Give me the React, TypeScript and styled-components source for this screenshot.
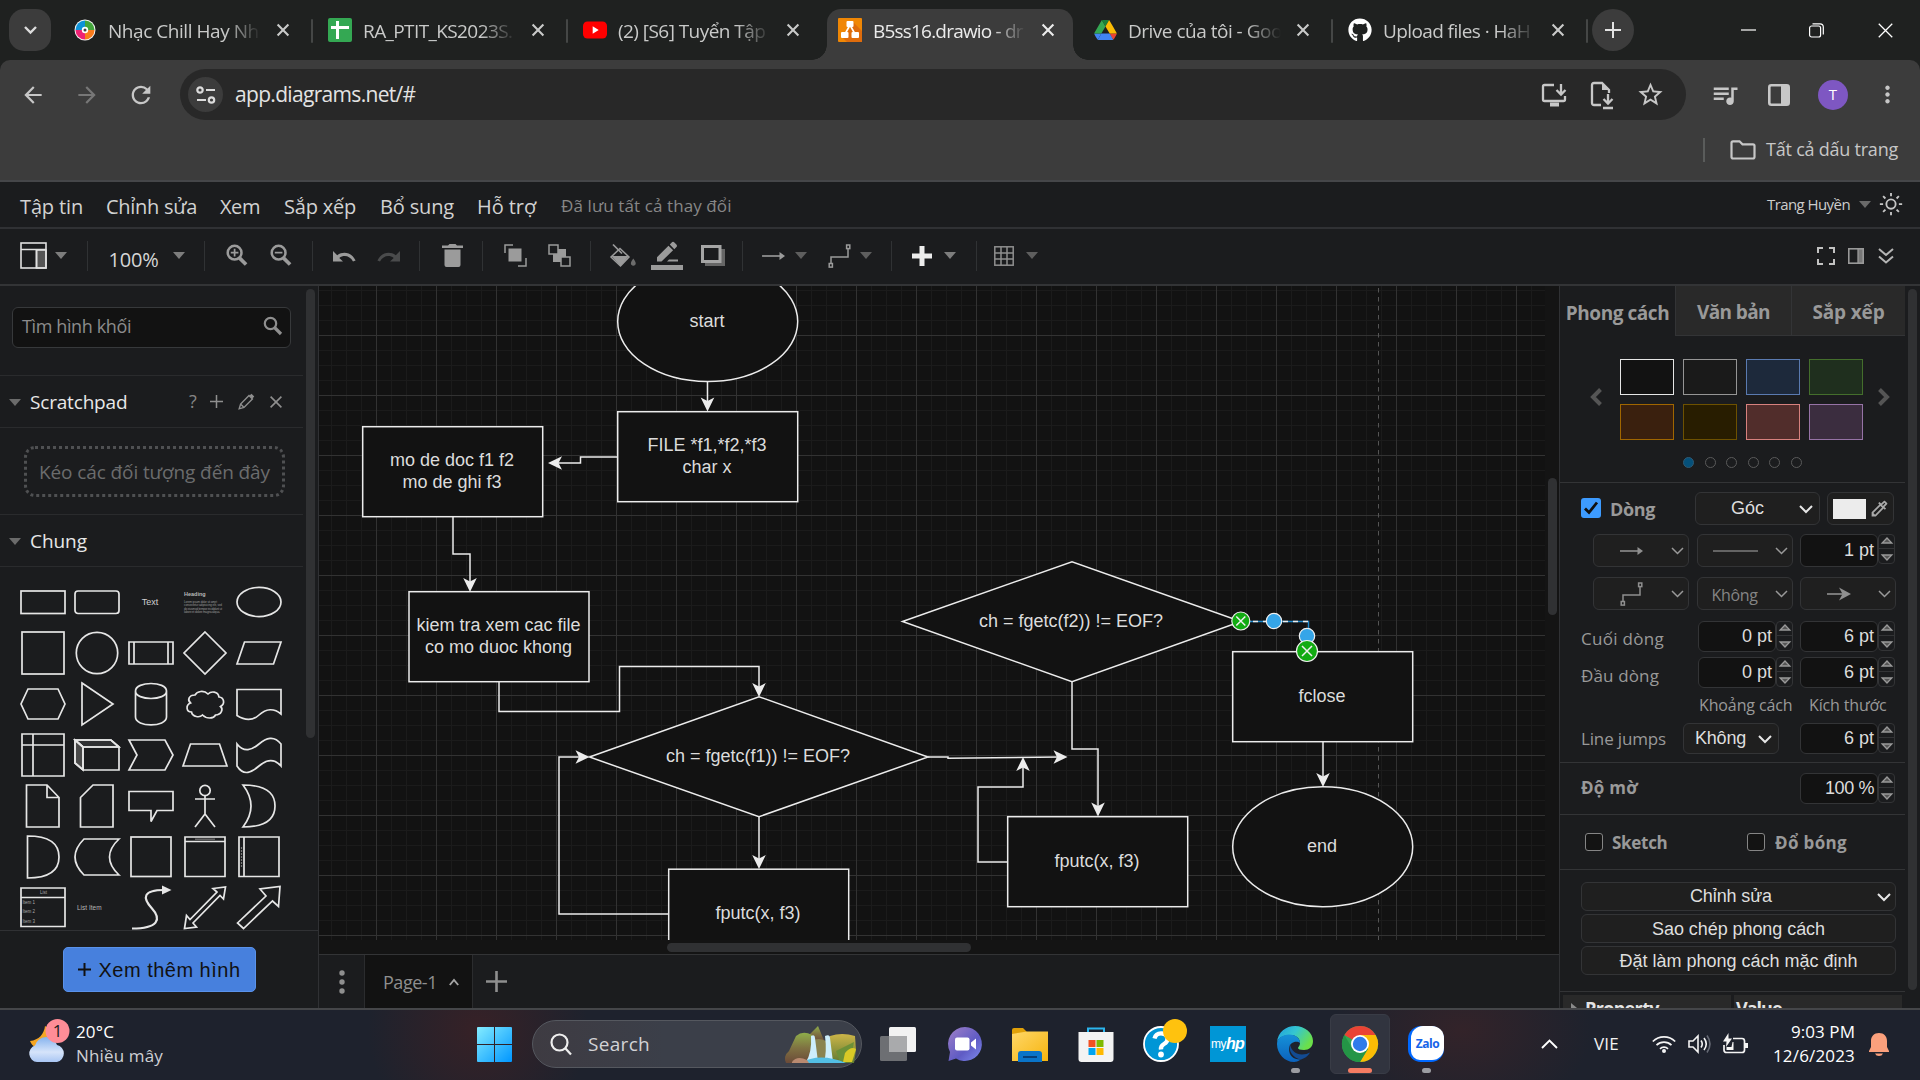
import React from 'react';
import styled, { createGlobalStyle, css } from 'styled-components';
import {
  MdArrowBack, MdArrowForward, MdRefresh, MdStarBorder, MdQueueMusic, MdMoreVert,
  MdOutlineColorize,
} from 'react-icons/md';
import { FaGithub } from 'react-icons/fa';

const ui = '"Open Sans", "Noto Sans", sans-serif';
const arial = '"Liberation Sans", sans-serif';

const GlobalStyle = createGlobalStyle`
  * { box-sizing: border-box; }
  body { margin: 0; background: #1b1c1e; overflow: hidden; }
  svg { display: block; flex-shrink: 0; overflow: visible; }
`;

const Screen = styled.div`
  width: 1920px;
  height: 1080px;
  display: flex;
  flex-direction: column;
  overflow: hidden;
  font-family: ${ui};
  color: #e3e3e3;
`;

const Text = styled.span<{ $s?: number; $ls?: number; $c?: string; $b?: boolean; $arial?: boolean; $pt?: number }>`
  font-family: ${p => (p.$arial ? arial : ui)};
  font-size: ${p => p.$s ?? 18}px;
  letter-spacing: ${p => p.$ls ?? 0}px;
  color: ${p => p.$c ?? 'inherit'};
  font-weight: ${p => (p.$b ? 700 : 400)};
  padding-top: ${p => p.$pt ?? 0}px;
  line-height: 1.3;
  white-space: nowrap;
`;

const Slot = styled.div<{ $w: number; $gap?: number; $h?: number; $end?: boolean }>`
  width: ${p => p.$w}px;
  ${p => p.$h && `height: ${p.$h}px;`}
  margin-left: ${p => p.$gap ?? 0}px;
  flex-shrink: 0;
  display: flex;
  align-items: center;
  justify-content: ${p => (p.$end ? 'flex-end' : 'center')};
`;

/* ---------- browser chrome ---------- */

const TabStrip = styled.div`
  height: 60px;
  background: #1f2120;
  display: flex;
  align-items: flex-start;
  padding: 9px 0 0 9px;
`;

const TabSearch = styled.div`
  width: 42px;
  height: 42px;
  border-radius: 15px;
  margin-right: 11px;
  background: #3c3c3c;
  display: flex;
  align-items: center;
  justify-content: center;
`;

const TabCell = styled.div`
  width: 255px;
  height: 51px;
  display: flex;
`;

const TabBody = styled.div<{ $active?: boolean }>`
  position: relative;
  width: 246px;
  height: 51px;
  padding: 0 0 9px 11px;
  display: flex;
  align-items: center;
  color: #c9cac9;
  ${p => p.$active && css`
    background: #3c3c3c;
    color: #ececec;
    border-radius: 14px 14px 0 0;
    &::before, &::after {
      content: '';
      position: absolute;
      bottom: 0;
      width: 15px;
      height: 15px;
    }
    &::before { left: -15px; background: radial-gradient(circle at 0 0, transparent 14.5px, #3c3c3c 15px); }
    &::after { right: -15px; background: radial-gradient(circle at 100% 0, transparent 14.5px, #3c3c3c 15px); }
  `}
`;

const TabTitle = styled.div`
  width: 153px;
  margin: 2px 12px 0 11px;
  overflow: hidden;
  mask-image: linear-gradient(90deg, #000 118px, transparent 153px);
`;

const TabDivider = styled.div`
  width: 2px;
  height: 24px;
  margin: 10px 0 0 3px;
  background: #454746;
  border-radius: 1px;
`;

const NewTab = styled(TabSearch)`
  border-radius: 50%;
  margin: 0;
`;

const WindowButtons = styled.div`
  margin-left: auto;
  width: 206px;
  height: 42px;
  display: flex;
  align-items: center;
`;

const Toolbar = styled.div`
  background: #1f2120;
`;

const ToolbarInner = styled.div`
  height: 69px;
  padding-top: 9px;
  background: #3c3c3c;
  border-radius: 10px 10px 0 0;
  display: flex;
  align-items: flex-start;
  color: #c7c7c7;
`;

const NavRow = styled.div`
  height: 51px;
  display: flex;
  align-items: center;
`;

const Omnibox = styled.div`
  width: 1506px;
  height: 51px;
  padding-left: 8px;
  border-radius: 26px;
  background: #282828;
  display: flex;
  align-items: center;
`;

const SiteInfo = styled.div`
  width: 35px;
  height: 35px;
  margin-right: 12px;
  border-radius: 50%;
  background: #3c3c3c;
  display: flex;
  align-items: center;
  justify-content: center;
`;

const OmniActions = styled.div`
  margin: 0 12px 0 auto;
  display: flex;
`;

const Avatar = styled.div`
  width: 30px;
  height: 30px;
  border-radius: 50%;
  background: #7e57c2;
  display: flex;
  align-items: center;
  justify-content: center;
`;

const BookmarkBar = styled.div`
  height: 53px;
  padding: 0 22px 10px 0;
  background: #3c3c3c;
  border-bottom: 2px solid #454649;
  display: flex;
  align-items: center;
  justify-content: flex-end;
  color: #c7c7c7;
`;

const BookmarkDivider = styled.div`
  width: 2px;
  height: 24px;
  margin-right: 25px;
  background: #5a5c5b;
`;

/* ---------- application ---------- */

const MenuBar = styled.div`
  height: 47px;
  padding: 0 16px 0 20px;
  border-bottom: 2px solid #303134;
  background: #1b1c1e;
  display: flex;
  align-items: center;
`;

const MenuItems = styled.div`
  display: flex;
  align-items: center;
  margin-top: 4px;
`;

const MenuItem = styled.div<{ $w: number }>`
  width: ${p => p.$w}px;
  flex-shrink: 0;
`;

const UserArea = styled.div`
  margin-left: auto;
  display: flex;
  align-items: center;
`;

const ToolRow = styled.div`
  height: 57px;
  padding: 0 19px 2px 13px;
  border-bottom: 2px solid #333436;
  background: #1b1c1e;
  display: flex;
  align-items: center;
  color: #9b9b9b;
`;

const ToolDivider = styled.div`
  width: 1px;
  height: 30px;
  background: #303234;
`;

const ToolRight = styled.div`
  margin-left: auto;
  display: flex;
  align-items: center;
`;

const Workspace = styled.div`
  height: 722px;
  display: flex;
  background: #1b1c1e;
`;

const Sidebar = styled.div`
  width: 319px;
  height: 722px;
  border-right: 1px solid #303134;
  display: flex;
  flex-direction: column;
`;

const SidebarScroll = styled.div`
  height: 645px;
  display: flex;
  justify-content: space-between;
  padding-right: 3px;
  overflow: hidden;
  border-bottom: 1px solid #303134;
`;

const SidebarContent = styled.div`
  width: 303px;
`;

const Thumb = styled.div<{ $w: number; $h: number }>`
  width: ${p => p.$w}px;
  height: ${p => p.$h}px;
  border-radius: 5px;
  background: #303133;
`;

const SearchArea = styled.div`
  height: 90px;
  padding: 21px 12px 0 12px;
  border-bottom: 1px solid #2a2b2d;
`;

const SearchBox = styled.div`
  width: 279px;
  height: 41px;
  padding: 0 8px 2px 9px;
  border: 1px solid #37393b;
  border-radius: 6px;
  background: #121212;
  display: flex;
  align-items: center;
  justify-content: space-between;
  color: #8c8c8c;
`;

const SectionHead = styled.div`
  height: 52px;
  padding: 1px 14px 0 9px;
  border-bottom: 1px solid #2a2b2d;
  display: flex;
  align-items: center;
  color: #e8e8e8;
`;

const HeadIcons = styled.div`
  margin-left: auto;
  display: flex;
  color: #8f8f8f;
`;

const DropArea = styled.div`
  height: 87px;
  padding: 18px 0 0 24px;
  border-bottom: 1px solid #2a2b2d;
`;

const DropBox = styled.div`
  width: 261px;
  height: 51px;
  padding-top: 2px;
  border: 3px dotted #4f5052;
  border-radius: 11px;
  display: flex;
  align-items: center;
  justify-content: center;
`;

const ShapeGrid = styled.div`
  padding: 9px 0 0 16px;
  display: grid;
  grid-template-columns: repeat(5, 54px);
  grid-auto-rows: 51px;
  align-items: center;
  justify-items: center;
`;

const SidebarFoot = styled.div`
  height: 77px;
  padding-top: 16px;
  display: flex;
  justify-content: center;
`;

const MoreShapes = styled.div`
  width: 193px;
  height: 45px;
  border-radius: 5px;
  border: 1px solid #5a92ea;
  background: #4780dd;
  color: #111;
  display: flex;
  align-items: center;
  justify-content: center;
  gap: 8px;
`;

const CanvasColumn = styled.div`
  width: 1240px;
  height: 722px;
  background: #141414;
  display: flex;
  flex-direction: column;
`;

const CanvasRow = styled.div`
  height: 654px;
  display: flex;
`;

const CanvasView = styled.svg`
  width: 1226px;
  height: 654px;
  overflow: hidden;
  background: #121212;
`;

const VScroll = styled.div`
  padding: 192px 0 0 3px;
`;

const HScroll = styled.div`
  height: 14px;
  padding: 3px 0 0 348px;
`;

const PageBar = styled.div`
  height: 54px;
  border-top: 1px solid #333436;
  background: #1b1c1e;
  display: flex;
  align-items: center;
  color: #8f8f8f;
`;

const PageTab = styled.div`
  width: 109px;
  height: 53px;
  border: 1px solid #2b2c2e;
  border-width: 0 1px;
  background: #121212;
  display: flex;
  align-items: center;
  padding: 3px 0 0 18px;
  gap: 12px;
`;

const Panel = styled.div`
  width: 361px;
  height: 722px;
  border-left: 1px solid #303134;
  display: flex;
`;

const PanelContent = styled.div`
  width: 345px;
  height: 722px;
  overflow: hidden;
  color: #999;
`;

const PanelScroll = styled.div`
  width: 15px;
  padding: 3px 0 0 3px;
`;

const Tabs = styled.div`
  height: 50px;
  display: flex;
`;

const PanelTab = styled.div<{ $w: number; $off?: boolean }>`
  width: ${p => p.$w}px;
  height: 50px;
  padding-top: 4px;
  background: ${p => (p.$off ? '#292929' : 'transparent')};
  border: solid #333436;
  border-width: ${p => (p.$off ? '0 0 1px 1px' : '0')};
  display: flex;
  align-items: center;
  justify-content: center;
`;

const SwatchSection = styled.div`
  height: 147px;
  padding-top: 23px;
  border-bottom: 1px solid #333436;
`;

const SwatchRow = styled.div`
  display: flex;
  align-items: center;
  padding: 0 13px 0 29px;
  gap: 17px;
`;

const PageArrow = styled.svg`
  width: 14px;
  height: 18px;
  margin-bottom: 6px;
  fill: none;
  stroke: #555;
  stroke-width: 4;
`;

const Swatches = styled.div`
  display: grid;
  grid-template-columns: repeat(4, 54px);
  grid-auto-rows: 36px;
  gap: 9px;
  margin-right: -3px;
`;

const Swatch = styled.div<{ $bg: string; $bd: string }>`
  border: 1px solid ${p => p.$bd};
  background: ${p => p.$bg};
`;

const Dots = styled.div`
  display: flex;
  gap: 10.5px;
  margin: 17px 0 0 123px;
`;

const Dot = styled.div<{ $on?: boolean }>`
  width: 11px;
  height: 11px;
  border-radius: 50%;
  border: 1px solid ${p => (p.$on ? '#2f5a73' : '#5a5a5a')};
  background: ${p => (p.$on ? '#05507a' : 'transparent')};
`;

const LineSection = styled.div`
  height: 280px;
  height: 271px;
  border-bottom: 1px solid #333436;
`;

const Row = styled.div<{ $h: number; $mt?: number; $flush?: boolean }>`
  height: ${p => p.$h}px;
  margin-top: ${p => p.$mt ?? 0}px;
  padding-left: ${p => (p.$flush ? 0 : 21)}px;
  display: flex;
  align-items: center;
`;

const Cell = styled.div<{ $w: number; $mt?: number }>`
  width: ${p => p.$w}px;
  margin-top: ${p => p.$mt ?? 0}px;
  flex-shrink: 0;
  display: flex;
  align-items: center;
`;

const Box = styled.div<{ $w: number; $ml?: number }>`
  width: ${p => p.$w}px;
  height: 100%;
  margin-left: ${p => p.$ml ?? 0}px;
  flex-shrink: 0;
  border: 1px solid #333436;
  border-radius: 6px;
  background: #1f1f1f;
  display: flex;
  align-items: center;
`;

const NumBox = styled(Box)`
  background: #121212;
  justify-content: flex-end;
  padding: 0 3px 0 0;
  color: #dcdcdc;
`;

const StepBox = styled.div`
  width: 17px;
  height: 30px;
  align-self: flex-start;
  border: 1px solid #333436;
  border-radius: 4px;
  display: flex;
  flex-direction: column;
  justify-content: space-around;
  align-items: center;
`;

const StepLine = styled.div`
  width: 15px;
  height: 1px;
  background: #333436;
`;

const Check = styled.div<{ $s: number; $on?: boolean }>`
  width: ${p => p.$s}px;
  height: ${p => p.$s}px;
  border-radius: 3px;
  border: ${p => (p.$on ? '0' : '1.5px solid #858585')};
  background: ${p => (p.$on ? '#3d9bff' : '#131313')};
  display: flex;
  align-items: center;
  justify-content: center;
`;

const SimpleSection = styled.div<{ $h: number }>`
  height: ${p => p.$h}px;
  padding-left: 21px;
  border-bottom: 1px solid #333436;
  display: flex;
  align-items: center;
`;

const ButtonSection = styled.div`
  height: 122px;
  padding: 12px 0 0 21px;
  border-bottom: 1px solid #333436;
  display: flex;
  flex-direction: column;
  gap: 3px;
`;

const WideButton = styled.div`
  width: 315px;
  height: 29px;
  padding-top: 1px;
  border: 1px solid #333436;
  border-radius: 6px;
  background: #1f1f1f;
  color: #dedede;
  display: flex;
  align-items: center;
  justify-content: center;
`;

const PropertyHead = styled.div`
  height: 40px;
  padding: 3px 0 0 3px;
  display: grid;
  grid-template-columns: 168px 168px;
  gap: 3px;
  color: #e4e4e4;
`;

const PropertyCell = styled.div`
  background: #292929;
  padding-top: 2px;
  display: flex;
`;

/* ---------- taskbar ---------- */

const Taskbar = styled.div`
  height: 72px;
  padding-bottom: 2px;
  border-top: 2px solid #454649;
  background:
    radial-gradient(ellipse 110px 110px at 478px 20px, rgba(56, 33, 38, 0.95), transparent),
    radial-gradient(ellipse 130px 90px at 1462px 20px, rgba(52, 35, 41, 0.95), transparent),
    #1e222d;
  display: flex;
  align-items: center;
`;

const Weather = styled.div`
  width: 477px;
  padding-left: 27px;
  display: flex;
  align-items: center;
  gap: 9px;
`;

const Stack = styled.div<{ $right?: boolean }>`
  display: flex;
  flex-direction: column;
  align-items: ${p => (p.$right ? 'flex-end' : 'flex-start')};
  gap: 2px;
`;

const TaskSearch = styled.div`
  width: 330px;
  height: 48px;
  margin-left: 20px;
  padding: 0 4px 0 17px;
  border-radius: 24px;
  border: 1px solid #55585f;
  background: linear-gradient(90deg, #3e3b42, #3b3f49 40%);
  display: flex;
  align-items: center;
  gap: 16px;
`;

const SearchArt = styled.div`
  margin-left: auto;
`;

const TaskApp = styled.div<{ $active?: boolean; $w?: number }>`
  width: ${p => p.$w ?? 66}px;
  height: 60px;
  border-radius: 6px;
  background: ${p => (p.$active ? '#31343f' : 'transparent')};
  border: 1px solid ${p => (p.$active ? '#393c46' : 'transparent')};
  display: flex;
  flex-direction: column;
  align-items: center;
  padding-top: 11px;
`;

const Indicator = styled.div<{ $w: number; $c: string }>`
  width: ${p => p.$w}px;
  height: 5px;
  margin-top: 6px;
  border-radius: 3px;
  background: ${p => p.$c};
`;

const HpTile = styled.div`
  width: 36px;
  height: 36px;
  background: #0096d6;
  color: #fff;
  font: italic 700 16px ${arial};
  letter-spacing: -0.8px;
  display: flex;
  align-items: center;
  justify-content: center;
`;

const HpSmall = styled.span`
  font: 400 12px ${arial};
  letter-spacing: -0.5px;
`;

const ZaloTile = styled.div`
  width: 36px;
  height: 36px;
  border-radius: 13px;
  background: #0068ff;
  padding-left: 3px;
`;

const ZaloFace = styled.div`
  width: 33px;
  height: 34px;
  border-radius: 12px 12px 12px 9px;
  background: #fff;
  color: #1664e8;
  font: 700 12px ${ui};
  letter-spacing: -0.4px;
  display: flex;
  align-items: center;
  justify-content: center;
`;

const Tray = styled.div`
  margin-left: auto;
  display: flex;
  align-items: center;
  color: #f2f2f2;
`;

/* ---------- small icons ---------- */

const Cross = ({ s = 12, w = 1.8, c = 'currentColor' }: { s?: number; w?: number; c?: string }) => (
  <svg width={s} height={s} viewBox="0 0 12 12" stroke={c} strokeWidth={(w * 12) / s} fill="none">
    <path d="M.6.6 11.4 11.4M11.4.6.6 11.4" />
  </svg>
);
const Plus = ({ s = 14, w = 2 }: { s?: number; w?: number }) => (
  <svg width={s} height={s} viewBox={`0 0 ${s} ${s}`} stroke="currentColor" strokeWidth={w}>
    <path d={`M0 ${s / 2}H${s}M${s / 2} 0V${s}`} />
  </svg>
);
const Caret = ({ c = '#7d7d7d', w = 12 }: { c?: string; w?: number }) => (
  <svg width={w} height={7} viewBox="0 0 12 7" preserveAspectRatio="none"><path d="M0 0h12L6 7z" fill={c} /></svg>
);
const Chevron = ({ w = 14, sw = 2, c = '#e6e6e6' }: { w?: number; sw?: number; c?: string }) => (
  <svg width={w} height={w / 2 + 1} viewBox={`0 0 ${w} ${w / 2 + 1}`} fill="none" stroke={c} strokeWidth={sw}>
    <path d={`M1 1 ${w / 2} ${w / 2} ${w - 1} 1`} />
  </svg>
);
const ConnectorIcon = ({ c = '#9b9b9b' }: { c?: string }) => (
  <svg width="24" height="24" viewBox="0 0 24 24" fill="none" stroke={c} strokeWidth="1.5">
    <path d="M3 19.5V13h17V4.5" /><rect x="1.2" y="19.5" width="3.2" height="3.6" /><rect x="18.6" y="1" width="3.2" height="3.6" />
  </svg>
);
const ArrowIcon = ({ c = '#9b9b9b', big }: { c?: string; big?: boolean }) => (
  <svg width="24" height="14" viewBox="0 0 24 14">
    <path d="M0 7h18" stroke={c} strokeWidth="1.6" />
    {big ? <path d="M12 .5 24 7 12 13.5 15.5 7z" fill={c} /> : <path d="M17.5 3 23 7l-5.5 4z" fill={c} />}
  </svg>
);
const Stepper = () => (
  <StepBox>
    <svg width="12" height="7" viewBox="0 0 12 7"><path d="M1.2 6 6 1l4.8 5z" fill="#555" stroke="#999" strokeWidth="1.3" /></svg>
    <StepLine />
    <svg width="12" height="7" viewBox="0 0 12 7"><path d="M1.2 1 6 6l4.8-5z" fill="#555" stroke="#999" strokeWidth="1.3" /></svg>
  </StepBox>
);
const PencilIcon = () => (
  <svg width="17" height="17" viewBox="0 0 17 17" fill="none" stroke="currentColor" strokeWidth="1.4">
    <path d="M1.2 15.8 2.6 11 11 2.6l3.4 3.4L6 14.4zM2.6 11 6 14.4" /><path d="m12.4 1.8 2.8 2.8" strokeWidth="3" />
  </svg>
);
const ZoomIcon = ({ plus }: { plus?: boolean }) => (
  <svg width="22" height="23" viewBox="0 0 23 23" fill="none" stroke="#9b9b9b">
    <circle cx="9" cy="8.5" r="7.2" strokeWidth="2.6" /><path d="m14 14 7 7" strokeWidth="3.8" />
    <path d={plus ? 'M5 8.5h8M9 4.5v8' : 'M5 8.5h8'} strokeWidth="1.8" />
  </svg>
);
const LensIcon = () => (
  <svg width="19" height="19" viewBox="0 0 19 19" fill="none" stroke="#8f8f8f">
    <circle cx="7.5" cy="6.5" r="5.7" strokeWidth="2.2" /><path d="m11.5 10.5 6.500 6.500" strokeWidth="3.2" />
  </svg>
);

/* ---------- tabs ---------- */

const MusicIcon = () => (
  <svg width="22" height="22" viewBox="0 0 22 22">
    <circle cx="11" cy="11" r="10.5" fill="#f4f4f4" />
    <path d="M11 11V1.5a9.5 9.5 0 0 1 9.5 9.5z" fill="#43a53c" />
    <path d="M11 11h9.5a9.5 9.5 0 0 1-9.5 9.5z" fill="#f97b1c" />
    <path d="M11 11v9.5A9.5 9.5 0 0 1 1.5 11z" fill="#ef2174" />
    <path d="M11 11H1.5A9.5 9.5 0 0 1 11 1.5z" fill="#0d93d8" />
    <circle cx="11" cy="11" r="3.2" fill="#fff" /><circle cx="11" cy="11" r="1.5" fill="#444" />
  </svg>
);
const SheetIcon = () => (
  <svg width="24" height="24" viewBox="0 0 24 24"><rect width="24" height="24" rx="2" fill="#34a853" /><path d="M9.5 3v18M3 9.5h18" stroke="#fff" strokeWidth="3" /></svg>
);
const YoutubeIcon = () => (
  <svg width="24" height="24" viewBox="0 0 24 24"><rect x="0" y="3.5" width="24" height="17" rx="4.5" fill="#f00" /><path d="m9.700 8.300 6 3.700-6 3.700z" fill="#fff" /></svg>
);
const DrawioIcon = () => (
  <svg width="24" height="24" viewBox="0 0 24 24">
    <rect width="24" height="24" rx="1" fill="#f08705" /><path d="M15 4 24 13v11H9l-5-5 8-8z" fill="#df6c0c" />
    <path d="m12 7-5 9M12 7l5 9" stroke="#fff" strokeWidth="1.6" />
    <rect x="8.5" y="3" width="7" height="6" rx="1" fill="#fff" /><rect x="3" y="14" width="7.5" height="6" rx="1" fill="#fff" /><rect x="13.5" y="14" width="7.5" height="6" rx="1" fill="#fff" />
  </svg>
);
const DriveIcon = () => (
  <svg width="23" height="20" viewBox="0 0 87.3 78">
    <path d="m6.6 66.850 3.850 6.650c.8 1.400 1.950 2.500 3.300 3.300l13.750-23.800h-27.500c0 1.550.4 3.100 1.200 4.500z" fill="#4285f4" />
    <path d="m43.650 25-13.750-23.800c-1.350.8-2.500 1.900-3.300 3.300l-25.400 44a9.060 9.060 0 0 0-1.200 4.500h27.500z" fill="#34a853" />
    <path d="m73.550 76.800c1.350-.8 2.500-1.900 3.300-3.300l1.600-2.750 7.650-13.250c.8-1.400 1.200-2.950 1.200-4.500h-27.500l5.850 11.500z" fill="#ea4335" />
    <path d="m43.650 25 13.750-23.800c-1.350-.8-2.900-1.200-4.500-1.200h-18.500c-1.600 0-3.150.45-4.500 1.200z" fill="#188038" />
    <path d="m59.800 53h-32.300l-13.750 23.800c1.350.8 2.900 1.200 4.500 1.200h50.800c1.600 0 3.150-.45 4.500-1.200z" fill="#4285f4" />
    <path d="m73.400 26.500-12.700-22c-.8-1.400-1.950-2.500-3.300-3.300l-13.750 23.800 16.150 28h27.450c0-1.550-.4-3.100-1.200-4.500z" fill="#fbbc04" />
  </svg>
);

type TabInfo = { title: string; ls: number; icon: React.ReactNode; active?: boolean; line?: boolean };
const tabs: TabInfo[] = [
  { title: 'Nhạc Chill Hay Nh', ls: -0.45, icon: <MusicIcon />, line: true },
  { title: 'RA_PTIT_KS2023S.', ls: -0.6, icon: <SheetIcon />, line: true },
  { title: '(2) [S6] Tuyển Tập', ls: -0.55, icon: <YoutubeIcon /> },
  { title: 'B5ss16.drawio - dr', ls: -0.8, icon: <DrawioIcon />, active: true },
  { title: 'Drive của tôi - Goo', ls: -0.5, icon: <DriveIcon />, line: true },
  { title: 'Upload files · HaH', ls: -0.6, icon: <FaGithub size={24} color="#fff" />, line: true },
];

function Browser() {
  return (
    <>
      <TabStrip>
        <TabSearch><Chevron w={13} sw={2.4} c="#dcdcdc" /></TabSearch>
        {tabs.map(t => (
          <TabCell key={t.title}>
            <TabBody $active={t.active}>
              <Slot $w={24}>{t.icon}</Slot>
              <TabTitle><Text $s={19} $ls={t.ls}>{t.title}</Text></TabTitle>
              <Slot $w={20}><Cross s={12} w={2.1} /></Slot>
            </TabBody>
            {t.line && <TabDivider />}
          </TabCell>
        ))}
        <NewTab><Plus s={16} w={2} /></NewTab>
        <WindowButtons>
          <Slot $w={69}><svg width="15" height="2"><path d="M0 1h15" stroke="#fff" strokeWidth="1.2" /></svg></Slot>
          <Slot $w={67}>
            <svg width="15" height="15" viewBox="0 0 15 15" fill="none" stroke="#fff" strokeWidth="1.2">
              <rect x=".6" y="3" width="11" height="11" rx="2" /><path d="M3.500.8h7.500q3.300 0 3.300 3.300v7.400" />
            </svg>
          </Slot>
          <Slot $w={71}><Cross s={15} w={1.3} c="#fff" /></Slot>
        </WindowButtons>
      </TabStrip>
      <Toolbar>
        <ToolbarInner>
          <NavRow>
            <Slot $w={34} $gap={16}><MdArrowBack size={26} /></Slot>
            <Slot $w={34} $gap={20}><MdArrowForward size={26} color="#777" /></Slot>
            <Slot $w={34} $gap={20}><MdRefresh size={28} /></Slot>
            <Slot $w={22} />
            <Omnibox>
              <SiteInfo>
                <svg width="20" height="18" viewBox="0 0 20 18" fill="none" stroke="#dcdcdc" strokeWidth="2.2">
                  <circle cx="4" cy="4" r="2.7" /><path d="M10 4h9M1 14h9" /><circle cx="15.5" cy="14" r="2.7" />
                </svg>
              </SiteInfo>
              <Text $s={21} $ls={-0.68} $c="#e3e3e3">app.diagrams.net/#</Text>
              <OmniActions>
                <Slot $w={48}>
                  <svg width="26" height="24" viewBox="0 0 26 24" fill="none" stroke="currentColor" strokeWidth="2.3">
                    <path d="M13 2H3.500Q2 2 2 3.500v13Q2 18 3.500 18h19q1.500 0 1.500-1.500V13" /><path d="M9 21.500h9" strokeWidth="4" /><path d="M20 1v10M15.500 7l4.500 4.500L24.500 7" />
                  </svg>
                </Slot>
                <Slot $w={48}>
                  <svg width="24" height="28" viewBox="0 0 24 28" fill="none" stroke="currentColor" strokeWidth="2.3">
                    <path d="M11 24H4q-2 0-2-2V4q0-2 2-2h8l7 7v3" /><path d="M12 2v7h7z" fill="currentColor" stroke="none" /><path d="M18 13v9M13.500 18l4.500 4.500 4.500-4.500M13 27h10" />
                  </svg>
                </Slot>
                <Slot $w={48}><MdStarBorder size={29} /></Slot>
              </OmniActions>
            </Omnibox>
            <Slot $w={40} $gap={19}><MdQueueMusic size={30} /></Slot>
            <Slot $w={40} $gap={14}>
              <svg width="22" height="22" viewBox="0 0 22 22"><rect x="1.3" y="1.3" width="19.4" height="19.4" rx="2" fill="none" stroke="currentColor" strokeWidth="2.6" /><path d="M13 1h8v20h-8z" fill="currentColor" /></svg>
            </Slot>
            <Slot $w={34} $gap={17}><Avatar><Text $s={15} $c="#fff">T</Text></Avatar></Slot>
            <Slot $w={34} $gap={20}><MdMoreVert size={27} /></Slot>
          </NavRow>
        </ToolbarInner>
      </Toolbar>
      <BookmarkBar>
        <BookmarkDivider />
        <Slot $w={26}>
          <svg width="26" height="20" viewBox="0 0 26 20" fill="none" stroke="currentColor" strokeWidth="2.2"><path d="M1.500 3Q1.500 1.300 3 1.300h6.500l3 3H23q1.500 0 1.500 1.500v11q0 1.700-1.500 1.700H3q-1.500 0-1.500-1.700z" /></svg>
        </Slot>
        <Slot $w={10} />
        <Text $s={18} $ls={-0.23}>Tất cả dấu trang</Text>
      </BookmarkBar>
    </>
  );
}

/* ---------- menus and tools ---------- */

const menus: [string, number, number][] = [
  ['Tập tin', -0.14, 86], ['Chỉnh sửa', -0.28, 114], ['Xem', -0.43, 64],
  ['Sắp xếp', -0.21, 96], ['Bổ sung', -0.15, 97], ['Hỗ trợ', -0.08, 84],
];

function Menus() {
  return (
    <MenuBar>
      <MenuItems>
        {menus.map(([name, ls, w]) => <MenuItem key={name} $w={w}><Text $s={20} $ls={ls} $c="#d2d2d2">{name}</Text></MenuItem>)}
        <Text $s={17} $ls={0.1} $c="#878787">Đã lưu tất cả thay đổi</Text>
      </MenuItems>
      <UserArea>
        <Text $s={15} $ls={-0.58} $c="#cccccc">Trang Huyền</Text>
        <Slot $w={12} $gap={9}><Caret c="#6a6a6a" /></Slot>
        <Slot $w={26} $gap={7}>
          <svg width="26" height="26" viewBox="0 0 26 28" fill="none" stroke="#c6c6c6" strokeWidth="2">
            <circle cx="13" cy="13" r="5" /><path d="M13 1v3.500M13 21.500V25M1 13h3.500M21.500 13H25M4.500 4.500 7 7M19 19l2.500 2.500M4.500 21.500 7 19M19 7l2.500-2.500" />
          </svg>
        </Slot>
      </UserArea>
    </MenuBar>
  );
}

function Tools() {
  return (
    <ToolRow>
      <Slot $w={41}>
        <svg width="27" height="27" viewBox="0 0 27 27" fill="none" stroke="#e0e0e0" strokeWidth="1.6">
          <path d="M16.500 8H26v18h-9.500z" fill="#555" /><rect x="1" y="1" width="25" height="25" /><path d="M1 7.500h25M16.500 7.500V26" />
        </svg>
      </Slot>
      <Slot $w={12} $gap={1}><Caret /></Slot>
      <Slot $w={40}><ToolDivider /></Slot>
      <Slot $w={53}><Text $s={20} $ls={-0.21} $c="#d6d6d6" $pt={9}>100%</Text></Slot>
      <Slot $w={37}><Caret /></Slot>
      <Slot $w={14}><ToolDivider /></Slot>
      <Slot $w={52}><ZoomIcon plus /></Slot>
      <Slot $w={36}><ZoomIcon /></Slot>
      <Slot $w={26}><ToolDivider /></Slot>
      <Slot $w={38}>
        <svg width="23" height="12" viewBox="0 0 23 12"><path d="M0 1v10.500h10L6.300 8C11 4.500 17 6 20 11.500l2.600-1C19 3 11 .5 4.200 5.200z" fill="#9b9b9b" /></svg>
      </Slot>
      <Slot $w={50}>
        <svg width="23" height="12" viewBox="0 0 23 12"><path d="M23 1v10.500H13L16.700 8C12 4.500 6 6 3 11.500l-2.600-1C4 3 12 .5 18.800 5.200z" fill="#4a4b4c" /></svg>
      </Slot>
      <Slot $w={12}><ToolDivider /></Slot>
      <Slot $w={54}><svg width="21" height="23" viewBox="0 0 21 23" fill="#9b9b9b"><path d="M0 1.500h6L7.500 0h6L15 1.500h6V4H0zM2.500 5.500h16V21q0 2-2 2h-12q-2 0-2-2z" /></svg></Slot>
      <Slot $w={6}><ToolDivider /></Slot>
      <Slot $w={60}>
        <svg width="23" height="23" viewBox="0 0 23 23" fill="none" stroke="#9b9b9b" strokeWidth="1.5"><path d="M1 9V1h8M22 14v8h-8" /><rect x="4.5" y="4.5" width="13" height="13" fill="#9b9b9b" stroke="none" /></svg>
      </Slot>
      <Slot $w={28}>
        <svg width="23" height="23" viewBox="0 0 23 23" fill="#1b1c1e" stroke="#9b9b9b" strokeWidth="1.5"><rect x="5" y="5" width="13" height="13" fill="#9b9b9b" stroke="none" /><rect x="1" y="1" width="9" height="9" /><rect x="13" y="13" width="9" height="9" /></svg>
      </Slot>
      <Slot $w={34}><ToolDivider /></Slot>
      <Slot $w={32}>
        <svg width="26" height="24" viewBox="0 0 26 24" fill="none" stroke="#9b9b9b">
          <path d="M10 4.500 19 13l-8.500 9L1 13z" strokeWidth="1.5" /><path d="M1.500 12h17.500L10.500 22z" fill="#9b9b9b" stroke="none" />
          <path d="m3 .5 9 9" strokeWidth="1.7" /><path d="M23.300 14.500q3.200 4 2.200 6-2.200 2.500-4.400 0-1-2 2.200-6z" fill="#6c6c6c" stroke="none" />
        </svg>
      </Slot>
      <Slot $w={56}>
        <svg width="32" height="28" viewBox="0 0 32 28" fill="#9b9b9b"><path d="M0 23h32v5H0zM6 19.500v-4.300L17.500 3.700l4.600 4.600L10.500 19.500zM18.800 2.400 21.200 0q1.200-.6 2.200.4l2 2q1 1.200.3 2.400l-2.400 2.400zM16 19.500l2-2h9v2z" /></svg>
      </Slot>
      <Slot $w={36}>
        <svg width="24" height="21" viewBox="0 0 24 21"><path d="M4 4h20v17H4z" fill="#666" /><rect x="1.5" y="1.5" width="17.5" height="15" fill="#1b1c1e" stroke="#a5a5a5" strokeWidth="3" /></svg>
      </Slot>
      <Slot $w={22}><ToolDivider /></Slot>
      <Slot $w={42}><ArrowIcon /></Slot>
      <Slot $w={12}><Caret c="#5e5e5e" /></Slot>
      <Slot $w={40} $gap={13}><ConnectorIcon /></Slot>
      <Slot $w={12}><Caret c="#5e5e5e" /></Slot>
      <Slot $w={38}><ToolDivider /></Slot>
      <Slot $w={24}><svg width="20" height="20"><path d="M0 10h20M10 0v20" stroke="#ececec" strokeWidth="5" /></svg></Slot>
      <Slot $w={32}><Caret /></Slot>
      <Slot $w={20}><ToolDivider /></Slot>
      <Slot $w={36}>
        <svg width="20" height="20" viewBox="0 0 20 20" fill="none" stroke="#8f8f8f" strokeWidth="1.5"><rect x=".8" y=".8" width="18.4" height="18.4" /><path d="M7 1v18M13 1v18M1 7h18M1 13h18" /></svg>
      </Slot>
      <Slot $w={20}><Caret c="#5e5e5e" /></Slot>
      <ToolRight>
        <Slot $w={30}><svg width="18" height="18" viewBox="0 0 18 18" fill="none" stroke="#c2c2c2" strokeWidth="2"><path d="M1 6V1h5M12 1h5v5M17 12v5h-5M6 17H1v-5" /></svg></Slot>
        <Slot $w={30}><svg width="16" height="16" viewBox="0 0 16 16"><path d="M10 1h5v14h-5z" fill="#777" /><rect x=".8" y=".8" width="14.4" height="14.4" fill="none" stroke="#999" strokeWidth="1.6" /><path d="M10 1v14" stroke="#999" strokeWidth="1.3" /></svg></Slot>
        <Slot $w={30}><svg width="16" height="16" viewBox="0 0 16 16" fill="none" stroke="#b5b5b5" strokeWidth="2"><path d="m1 1 7 6 7-6M1 8.500l7 6 7-6" /></svg></Slot>
      </ToolRight>
    </ToolRow>
  );
}

/* ---------- shape palette ---------- */

const ShapeBox = ({ children }: { children: React.ReactNode }) => (
  <svg width="48" height="48" viewBox="0 0 48 48" fill="none" stroke="#e6e6e6" strokeWidth="1.7">{children}</svg>
);

const shapes: React.ReactNode[] = [
  <rect x="2" y="13" width="44" height="22.5" />,
  <rect x="2" y="13" width="44" height="22.5" rx="3" />,
  <text x="23" y="27" fontSize="9" fontFamily="Liberation Sans, sans-serif" textAnchor="middle" fill="#d0d0d0" stroke="none">Text</text>,
  <g fill="#b9b9b9" stroke="none" fontFamily="Liberation Sans, sans-serif">
    <text x="3" y="17.5" fontSize="5.5" fontWeight="700">Heading</text>
    <text x="3" y="25" fontSize="3" textLength="33" fill="#999">Lorem ipsum dolor sit amet</text>
    <text x="3" y="28.3" fontSize="3" textLength="38" fill="#999">consectetur adipisicing elit, sed</text>
    <text x="3" y="31.6" fontSize="3" textLength="38" fill="#999">do eiusmod tempor incididunt ut</text>
    <text x="3" y="35" fontSize="3" textLength="36" fill="#999">labore et dolore magna aliqua.</text>
  </g>,
  <ellipse cx="24" cy="24" rx="22" ry="14.6" />,
  <rect x="3" y="3" width="42" height="42" />,
  <circle cx="24" cy="24" r="20.7" />,
  <path d="M2 13h44v22H2zM7 13v22M41 13v22" />,
  <path d="M24 3 45 24 24 45 3 24z" />,
  <path d="M9.500 13H46L38.500 35H2z" />,
  <path d="M9 9h30l7 15-7 15H9L2 24z" />,
  <path d="M9 3 40 24 9 45z" />,
  <path d="M8.500 11v26c0 10.500 31 10.500 31 0V11M8.500 11c0-10 31-10 31 0s-31 10-31 0" />,
  <path d="M14 15c-6 0-8 5-4.500 8-5 2-4.500 9 1 9 1 5 8 6 11 3 4 4 11 4 13 0 6 0 8-6 5-8.500 5-3 3.500-9-1.500-9.500C37 11 30 11 27 14c-4-4-11-3-13 1z" />,
  <path d="M2 9.500h44V34c-7-6-15-5.500-22 1s-15 5-22 .5z" />,
  <path d="M3 3h42v42H3zM14 3v42M3 14h42" />,
  <g><path d="M2 9h36l8 7H10z" fill="#303133" /><path d="M2 9l8 7v23l-8-7z" fill="#4a4a4a" /><path d="M2 9h36l8 7v23H10l-8-7zM10 39V16h36M2 9l8 7" /></g>,
  <path d="M2 9h36l8 15-8 15H2l8-15z" />,
  <path d="M9.500 13h29L46 35H2z" />,
  <path d="M2 13c7 9 15 6 22 0s15-9 22 0v22c-7-8-15-6-22 0s-15 11-22 0z" />,
  <path d="M7.500 3H28l12 12.500V45h-32.500zM28 3v12.500h12" />,
  <path d="M20 3h20v42H7.500V15.500z" />,
  <path d="M2 9.500h44v19H30L24 39.500V28.500H2z" />,
  <g><circle cx="24" cy="8.5" r="5.2" /><path d="M24 14v18M14 17h20M24 32 14 45M24 32l10 13" /></g>,
  <path d="M8 3q32 0 32 21T8 45q16-21 0-42z" />,
  <path d="M8.500 3q31.500 0 31.500 21T8.500 45z" />,
  <path d="M11 6h35q-19 18 0 36H11q-18-18 0-36z" />,
  <rect x="4" y="4" width="40" height="39.5" />,
  <g><path d="M4 4h40v39.500H4zM4 8.500h40" /><path d="M14 6.200h20" stroke="#777" strokeWidth="1.2" /></g>,
  <g><path d="M4 4h40v39.500H4zM9 4v39.500" /><path d="M6.500 14v20" stroke="#777" strokeDasharray="2 1" strokeWidth="1.2" /></g>,
  <g>
    <path d="M2 4h44v38.500H2zM2 13.500h44" />
    <g fill="#aaa" stroke="none" fontSize="4.5" fontFamily="Liberation Sans, sans-serif">
      <text x="21" y="9.5">List</text><text x="3.5" y="20">Item 1</text><text x="3.5" y="29">Item 2</text><text x="3.5" y="38.5">Item 3</text>
    </g>
  </g>,
  <text x="4" y="25.5" fontSize="6.5" fontFamily="Liberation Sans, sans-serif" fill="#b5b5b5" stroke="none">List Item</text>,
  <g><path d="M5 44.500c26 0 30-9 20-20S16 6 37 6" strokeWidth="2.2" /><path d="m35 1.500 9.500 4.500-9.500 4.500z" fill="#e6e6e6" stroke="none" /></g>,
  <path d="m3.500 44.500 2-13 3.500 4L36 8l-4-3.500L44.500 3l-2 12-3.500-3.500L12 39l3.500 4z" />,
  <path d="M2.500 39 31 12l-6-7 20-2.500-1.500 20-6-5.500L8.500 44.500z" />,
];

function Palette() {
  return (
    <Sidebar>
      <SidebarScroll>
        <SidebarContent>
          <SearchArea>
            <SearchBox><Text $s={18} $ls={-0.38}>Tìm hình khối</Text><LensIcon /></SearchBox>
          </SearchArea>
          <SectionHead>
            <Slot $w={12}><Caret c="#6b6b6b" /></Slot>
            <Slot $w={9} />
            <Text $s={19} $ls={-0.18} $pt={1}>Scratchpad</Text>
            <HeadIcons>
              <Slot $w={20}><Text $s={18} $c="#858585">?</Text></Slot>
              <Slot $w={26}><Plus s={13} w={1.5} /></Slot>
              <Slot $w={34}><PencilIcon /></Slot>
              <Slot $w={26}><Cross s={12} w={1.6} /></Slot>
            </HeadIcons>
          </SectionHead>
          <DropArea>
            <DropBox><Text $s={19} $ls={-0.11} $c="#6b6c6d">Kéo các đối tượng đến đây</Text></DropBox>
          </DropArea>
          <SectionHead>
            <Slot $w={12}><Caret c="#6b6b6b" /></Slot>
            <Slot $w={9} />
            <Text $s={19} $ls={-0.05} $pt={1}>Chung</Text>
          </SectionHead>
          <ShapeGrid>{shapes.map((s, i) => <ShapeBox key={i}>{s}</ShapeBox>)}</ShapeGrid>
        </SidebarContent>
        <PanelScroll><Thumb $w={9} $h={449} /></PanelScroll>
      </SidebarScroll>
      <SidebarFoot>
        <MoreShapes><Plus s={13} w={2} /><Text $arial $s={20} $ls={0.49}>Xem thêm hình</Text></MoreShapes>
      </SidebarFoot>
    </Sidebar>
  );
}

/* ---------- diagram ---------- */

const Label = styled.text`
  font: 18px ${arial};
  fill: #dcdcdc;
  stroke: none;
  text-anchor: middle;
`;

const edges = [
  'M707.5 382V403', 'M617.5 457H580.5V463H556', 'M453 517V554H470V584',
  'M499 682V711.5H619.5V666.5H759V689', 'M759 817V861', 'M668.5 914H559V757H581',
  'M928 757H948V758.2L1059 757', 'M1008 862H978V787H1023V765', 'M1072 682V749H1098V808', 'M1323 742V778',
];
const heads: [number, number, number][] = [
  [707.5, 411.5, 90], [548, 463, 180], [470, 592, 90], [759, 697, 90], [759, 869, 90],
  [589.5, 757, 0], [1067.5, 757, 0], [1023, 757, 270], [1098, 816.5, 90], [1323, 787, 90],
];

function Diagram() {
  return (
    <CanvasView viewBox="319 286 1226 654">
      <defs>
        <pattern id="minor" x="316" y="275" width="15" height="15" patternUnits="userSpaceOnUse">
          <path d="M.5 0v15M0 .5h15" stroke="#1b1b1b" />
        </pattern>
        <pattern id="major" x="316" y="275" width="60" height="60" patternUnits="userSpaceOnUse">
          <path d="M.5 0v60M0 .5h60" stroke="#323232" />
        </pattern>
      </defs>
      <rect x="319" y="286" width="1226" height="654" fill="url(#minor)" />
      <rect x="319" y="286" width="1226" height="654" fill="url(#major)" />
      <path d="M1378.500 288V940" stroke="#555" strokeDasharray="4.5 4.5" />
      <g stroke="#ececec" strokeWidth="1.5" fill="#121212">
        <ellipse cx="707.7" cy="321.5" rx="90" ry="60" />
        <rect x="617.7" y="411.7" width="180" height="90" />
        <rect x="362.7" y="426.7" width="180" height="90" />
        <rect x="409" y="591.7" width="180" height="90" />
        <path d="M589.500 757 759 696.700 928 757 759 816.700z" />
        <rect x="668.7" y="869.2" width="180" height="90" />
        <path d="M902.500 621.500 1072 561.700 1241 621.500 1072 681.700z" />
        <rect x="1007.7" y="816.7" width="180" height="90" />
        <rect x="1232.7" y="651.7" width="180" height="90" />
        <ellipse cx="1322.7" cy="846.7" rx="90" ry="60" />
      </g>
      {edges.map(d => <path key={d} d={d} fill="none" stroke="#ececec" strokeWidth="1.5" />)}
      {heads.map(([x, y, a]) => (
        <path key={`${x}-${y}`} transform={`translate(${x} ${y}) rotate(${a})`} d="M0 0-14-6.800-10.500 0-14 6.800z" fill="#ececec" />
      ))}
      <path d="M1249 621.500H1308.500V643" fill="none" stroke="#1c86c9" strokeWidth="1.5" />
      <path d="M1253 621.500H1308" fill="none" stroke="#ececec" strokeWidth="1.5" strokeDasharray="5 5" />
      <g stroke="#f0f0f0" strokeWidth="1.2">
        <circle cx="1274" cy="621" r="7.7" fill="#35a5e8" />
        <circle cx="1307" cy="636" r="7.7" fill="#35a5e8" />
        <circle cx="1240.8" cy="621" r="9" fill="#12ab12" />
        <circle cx="1307" cy="651" r="10.5" fill="#12ab12" />
        <path d="m1236.300 616.500 9 9m0-9-9 9M1302 646l10 10m0-10-10 10" strokeWidth="1.5" />
      </g>
      <Label x="707" y="327">start</Label>
      <Label x="707" y="451">FILE *f1,*f2,*f3</Label>
      <Label x="707" y="473">char x</Label>
      <Label x="452" y="466">mo de doc f1 f2</Label>
      <Label x="452" y="488">mo de ghi f3</Label>
      <Label x="498.5" y="631">kiem tra xem cac file</Label>
      <Label x="498.5" y="653">co mo duoc khong</Label>
      <Label x="758" y="762">ch = fgetc(f1)) != EOF?</Label>
      <Label x="758" y="919">fputc(x, f3)</Label>
      <Label x="1071" y="627">ch = fgetc(f2)) != EOF?</Label>
      <Label x="1097" y="867">fputc(x, f3)</Label>
      <Label x="1322" y="702">fclose</Label>
      <Label x="1322" y="852">end</Label>
    </CanvasView>
  );
}

function CanvasArea() {
  return (
    <CanvasColumn>
      <CanvasRow>
        <Diagram />
        <VScroll><Thumb $w={9} $h={137} /></VScroll>
      </CanvasRow>
      <HScroll><Thumb $w={304} $h={9} /></HScroll>
      <PageBar>
        <Slot $w={45}>
          <svg width="6" height="24" viewBox="0 0 6 24" fill="#8f8f8f"><circle cx="3" cy="3" r="2.7" /><circle cx="3" cy="12" r="2.7" /><circle cx="3" cy="21" r="2.7" /></svg>
        </Slot>
        <PageTab>
          <Text $s={18} $ls={-0.47}>Page-1</Text>
          <svg width="10" height="8" viewBox="0 0 10 8" fill="none" stroke="#a5a5a5" strokeWidth="1.9"><path d="m.8 6 4.200-5 4.200 5" /></svg>
        </PageTab>
        <Slot $w={47}><Plus s={21} w={2.6} /></Slot>
      </PageBar>
    </CanvasColumn>
  );
}

/* ---------- format panel ---------- */

const swatchColors: [string, string][] = [
  ['#121212', '#e6e6e6'], ['#1a1a1a', '#959595'], ['#1d293b', '#5a7ab0'], ['#1f2f1e', '#446e2c'],
  ['#3a200e', '#a06600'], ['#281d00', '#6d5100'], ['#512d2b', '#d7817e'], ['#3b2d3f', '#9673a6'],
];

const Num = ({ value, ml = 0, ls = 0 }: { value: string; ml?: number; ls?: number }) => (
  <>
    <NumBox $w={78} $ml={ml}><Text $arial $s={18} $ls={ls}>{value}</Text></NumBox>
    <Stepper />
  </>
);

const ThinChevron = () => <Chevron w={13} sw={1.5} c="#999" />;

function FormatPanel() {
  return (
    <Panel>
      <PanelContent>
        <Tabs>
          <PanelTab $w={115}><Text $b $s={19} $ls={-0.45}>Phong cách</Text></PanelTab>
          <PanelTab $w={116} $off><Text $b $s={19} $ls={-0.6}>Văn bản</Text></PanelTab>
          <PanelTab $w={114} $off><Text $b $s={19} $ls={-0.16}>Sắp xếp</Text></PanelTab>
        </Tabs>
        <SwatchSection>
          <SwatchRow>
            <PageArrow viewBox="0 0 14 18"><path d="M11.500 1.500 4 9l7.500 7.500" /></PageArrow>
            <Swatches>{swatchColors.map(([bg, bd]) => <Swatch key={bg} $bg={bg} $bd={bd} />)}</Swatches>
            <PageArrow viewBox="0 0 14 18"><path d="M2.500 1.500 10 9l-7.500 7.500" /></PageArrow>
          </SwatchRow>
          <Dots><Dot $on /><Dot /><Dot /><Dot /><Dot /><Dot /></Dots>
        </SwatchSection>
        <LineSection>
          <Row $h={33} $mt={9}>
            <Cell $w={29} $mt={-1}>
              <Check $s={20} $on><svg width="14" height="14" viewBox="0 0 14 14" fill="none" stroke="#111" strokeWidth="2.8"><path d="M1 7.500 5 11.500 13 1.500" /></svg></Check>
            </Cell>
            <Cell $w={85} $mt={3}><Text $b $s={18} $ls={-0.37}>Dòng</Text></Cell>
            <Box $w={125}><Slot $w={103}><Text $arial $s={18} $c="#dedede" $pt={1}>Góc</Text></Slot><Slot $w={14}><Chevron /></Slot></Box>
            <Box $w={67} $ml={7}>
              <Slot $w={43}><svg width="33" height="20"><rect width="33" height="20" fill="#ececec" /></svg></Slot>
              <Slot $w={16}><MdOutlineColorize size={21} color="#aaa" /></Slot>
            </Box>
          </Row>
          <Row $h={33} $mt={9}>
            <Box $w={96} $ml={12}><Slot $w={75}><ArrowIcon c="#8f8f8f" /></Slot><Slot $w={16}><ThinChevron /></Slot></Box>
            <Box $w={96} $ml={8}><Slot $w={75}><svg width="45" height="2"><path d="M0 1h45" stroke="#aaa" /></svg></Slot><Slot $w={16}><ThinChevron /></Slot></Box>
            <Num value="1 pt" ml={7} />
          </Row>
          <Row $h={33} $mt={10}>
            <Box $w={96} $ml={12}><Slot $w={75}><ConnectorIcon c="#8f8f8f" /></Slot><Slot $w={16}><ThinChevron /></Slot></Box>
            <Box $w={96} $ml={8}><Slot $w={73}><Text $s={16} $ls={-0.35} $c="#858585" $pt={3}>Không</Text></Slot><Slot $w={20}><ThinChevron /></Slot></Box>
            <Box $w={96} $ml={7}><Slot $w={76}><ArrowIcon c="#8f8f8f" big /></Slot><Slot $w={15}><ThinChevron /></Slot></Box>
          </Row>
          <Row $h={31} $mt={11}>
            <Cell $w={117} $mt={6}><Text $s={17} $ls={0.29}>Cuối dòng</Text></Cell>
            <Num value="0 pt" /><Num value="6 pt" ml={7} />
          </Row>
          <Row $h={31} $mt={5}>
            <Cell $w={117} $mt={7}><Text $s={17} $ls={0.14}>Đầu dòng</Text></Cell>
            <Num value="0 pt" /><Num value="6 pt" ml={7} />
          </Row>
          <Row $h={28} $mt={3}>
            <Cell $w={118} />
            <Cell $w={110}><Text $s={16} $ls={-0.12}>Khoảng cách</Text></Cell>
            <Text $s={16} $ls={-0.15}>Kích thước</Text>
          </Row>
          <Row $h={31} $mt={4}>
            <Cell $w={102} $mt={2}><Text $s={17} $ls={-0.15}>Line jumps</Text></Cell>
            <Box $w={96}><Slot $w={73}><Text $arial $s={18} $ls={-0.21} $c="#dedede">Không</Text></Slot><Slot $w={15}><Chevron /></Slot></Box>
            <Num value="6 pt" ml={21} />
          </Row>
        </LineSection>
        <SimpleSection $h={52}>
          <Cell $w={219}><Text $b $s={17} $ls={0.25}>Độ mờ</Text></Cell>
          <Row $h={31} $flush><Num value="100 %" ls={-0.41} /></Row>
        </SimpleSection>
        <SimpleSection $h={55}>
          <Cell $w={31}><Slot $w={18} $gap={4}><Check $s={18} /></Slot></Cell>
          <Cell $w={135} $mt={2}><Text $b $s={17} $ls={-0.3}>Sketch</Text></Cell>
          <Cell $w={28}><Check $s={18} /></Cell>
          <Cell $w={80} $mt={2}><Text $b $s={17} $ls={0.34}>Đổ bóng</Text></Cell>
        </SimpleSection>
        <ButtonSection>
          <WideButton>
            <Slot $w={290}><Text $arial $s={18} $ls={-0.12}>Chỉnh sửa</Text></Slot>
            <Slot $w={15}><Chevron /></Slot>
          </WideButton>
          <WideButton><Text $arial $s={18} $ls={-0.06} $pt={1}>Sao chép phong cách</Text></WideButton>
          <WideButton><Text $arial $s={18} $pt={1}>Đặt làm phong cách mặc định</Text></WideButton>
        </ButtonSection>
        <PropertyHead>
          <PropertyCell>
            <Slot $w={22} $h={22}><svg width="6" height="10"><path d="M0 0 6 5 0 10z" fill="#8a8a8a" /></svg></Slot>
            <Text $b $s={18} $ls={-0.61}>Property</Text>
          </PropertyCell>
          <PropertyCell><Slot $w={2} /><Text $b $s={18} $ls={-1}>Value</Text></PropertyCell>
        </PropertyHead>
      </PanelContent>
      <PanelScroll><Thumb $w={9} $h={701} /></PanelScroll>
    </Panel>
  );
}

/* ---------- taskbar ---------- */

function SystemBar() {
  return (
    <Taskbar>
      <Weather>
        <svg width="40" height="44" viewBox="27 1018 40 44">
          <defs><linearGradient id="cloud" x1="0" y1="0" x2="0" y2="1"><stop offset="0" stopColor="#86b3ee" /><stop offset=".6" stopColor="#d6e4fa" /><stop offset="1" stopColor="#a9c6f3" /></linearGradient></defs>
          <path d="M45 1022c-1 8-6 14-15 15 3 8 12 10 19 6 6-4 7-14-4-21z" fill="#f5a623" />
          <path d="M37 1058a8.500 8.500 0 0 1-2-16.500 11.500 11.500 0 0 1 22-.5 8.700 8.700 0 0 1 0 17z" fill="url(#cloud)" />
          <circle cx="57.5" cy="1027" r="12" fill="#ff8d97" />
          <text x="57.5" y="1033" fontSize="17" textAnchor="middle" fontFamily="Open Sans, sans-serif" fill="#222">1</text>
        </svg>
        <Stack>
          <Text $s={17} $ls={0.14} $c="#fff">20°C</Text>
          <Text $s={17} $ls={0.15} $c="#cfd0d4">Nhiều mây</Text>
        </Stack>
      </Weather>
      <svg width="35" height="35" viewBox="0 0 35 35">
        <defs><linearGradient id="win" x1="0" y1="0" x2="1" y2="1"><stop offset="0" stopColor="#84ecff" /><stop offset="1" stopColor="#0096ff" /></linearGradient></defs>
        <path d="M1 0h16v17H0V1q0-1 1-1zM18 0h16q1 0 1 1v16H18zM0 18h17v17H1q-1 0-1-1zM18 18h17v16q0 1-1 1H18z" fill="url(#win)" />
      </svg>
      <TaskSearch>
        <svg width="22" height="23" viewBox="0 0 22 23" fill="none" stroke="#eee" strokeWidth="2.2"><circle cx="9.5" cy="9.5" r="8" /><path d="m15.500 15.500 5.500 6" /></svg>
        <Text $s={19} $ls={0.31} $c="#d2d3d6">Search</Text>
        <SearchArt>
          <svg width="73" height="39" viewBox="0 -2 73 39">
            <defs>
              <linearGradient id="moss" x1="0" y1="0" x2="0" y2="1"><stop offset="0" stopColor="#8fae4a" /><stop offset=".5" stopColor="#7f7242" /><stop offset="1" stopColor="#6b4a38" /></linearGradient>
              <linearGradient id="rock" x1="0" y1="0" x2="0" y2="1"><stop offset="0" stopColor="#cdb548" /><stop offset="1" stopColor="#5f7a30" /></linearGradient>
            </defs>
            <path d="M22 11 34-1l5 12 2 4H25z" fill="url(#moss)" />
            <path d="M2 36q-3-7 3-12L12 9q7-6 16-1v28z" fill="url(#moss)" />
            <path d="M46 9q12-4 25 0l1 14-2 13H46z" fill="url(#rock)" />
            <path d="M28 14q6-4 14 0l2 22H28z" fill="#8a8350" />
            <path d="M27 9q4-2 4 2l3 24H22q6-10 5-26zM41 9q5-2 5 2l3 24H40q3-10 1-26z" fill="#cdeefc" />
            <path d="M52 24l18-9-3 17-11 3z" fill="#6c9038" /><path d="M61 26q6-7 11-4l-4 13h-9z" fill="#d9c926" />
            <path d="M16 36q20-11 46 0z" fill="#53bfe4" /><path d="M8 35q5-7 15-2l2 3H8z" fill="#b98a70" />
          </svg>
        </SearchArt>
      </TaskSearch>
      <TaskApp $w={71}>
        <svg width="37" height="36" viewBox="0 0 37 36"><rect x="1" y="10" width="27" height="25" rx="1.5" fill="#6d6f73" /><rect x="10" y="1" width="27" height="25" rx="1.5" fill="#f2f2f2" /><path d="M10 10h18v16H10z" fill="#a9aaac" /></svg>
      </TaskApp>
      <TaskApp $w={63}>
        <svg width="36" height="36" viewBox="0 0 36 36">
          <defs><linearGradient id="chat" x1="0" y1="0" x2="1" y2="1"><stop offset="0" stopColor="#a080c8" /><stop offset=".6" stopColor="#5f5bc4" /><stop offset="1" stopColor="#7f8df0" /></linearGradient></defs>
          <path d="M18 1a17 17 0 1 1-9 31.500L1.500 35 3 26A17 17 0 0 1 18 1z" fill="url(#chat)" />
          <rect x="8" y="11.5" width="14.5" height="13" rx="2" fill="#fff" /><path d="m24 16.500 5-4v11l-5-4z" fill="#fff" />
        </svg>
      </TaskApp>
      <TaskApp $w={68}>
        <svg width="36" height="36" viewBox="0 0 36 36">
          <defs><linearGradient id="fold" x1="0" y1="0" x2="1" y2="1"><stop offset="0" stopColor="#ffd768" /><stop offset="1" stopColor="#f6b40e" /></linearGradient></defs>
          <path d="M0 4q0-2 2-2h9l4 4v4H0z" fill="#e0a008" /><path d="M0 8l15-2.500h21V35H0z" fill="url(#fold)" />
          <path d="M6 36V28q0-3 3-3h18q3 0 3 3v8z" fill="#0a74c8" /><path d="M11 31h14" stroke="#083f77" strokeWidth="2" />
        </svg>
      </TaskApp>
      <TaskApp $w={63}>
        <svg width="36" height="36" viewBox="0 0 36 36">
          <path d="M10 8V2.500h16V8" fill="none" stroke="#2bb5ee" strokeWidth="2" /><path d="M.5 6h35v27q0 3-3 3h-29q-3 0-3-3z" fill="#f3f3f3" />
          <path d="M10.500 14h7v7h-7z" fill="#f25022" /><path d="M18.500 14h7v7h-7z" fill="#7fba00" /><path d="M10.500 22h7v7h-7z" fill="#00a4ef" /><path d="M18.500 22h7v7h-7z" fill="#ffb900" />
        </svg>
      </TaskApp>
      <TaskApp $w={68}>
        <svg width="36" height="36" viewBox="0 0 36 36">
          <circle cx="18" cy="18" r="17" fill="#0096d6" stroke="#fff" strokeWidth="1.8" />
          <path d="M11.500 12.500Q13 7 19 7.500q5.500.5 5.500 5.500 0 3-3.500 5t-3 5.500" fill="none" stroke="#fff" strokeWidth="4.3" /><circle cx="18" cy="28.5" r="2.9" fill="#fff" />
          <circle cx="32" cy="5" r="12" fill="#ffc20e" />
        </svg>
      </TaskApp>
      <TaskApp $w={65}><HpTile><HpSmall>my</HpSmall>hp</HpTile></TaskApp>
      <TaskApp $w={70}>
        <svg width="36" height="36" viewBox="0 0 36 36">
          <defs>
            <linearGradient id="e1" x1="0" y1="0" x2="1" y2=".5"><stop offset="0" stopColor="#1e9de0" /><stop offset=".5" stopColor="#35c6d0" /><stop offset="1" stopColor="#6be04a" /></linearGradient>
            <linearGradient id="e2" x1="0" y1="0" x2="0" y2="1"><stop offset="0" stopColor="#1691d8" /><stop offset="1" stopColor="#0b62bd" /></linearGradient>
          </defs>
          <path d="M0 16C1 6 9 0 18 0c10 0 18 7 18 15 0 6-4 9-9 9-4 0-6-1-6-2s2-2 2-5c0-5-4-8-10-8C7 9 2 11 0 16z" fill="url(#e1)" />
          <path d="M0 18c0-6 6-9.500 12-9.500 7 0 11 4 11 8.500-3-3-11-1-11 6 0 7 5 11 12 10.500C20 36 17 36 17 36 8 36 0 28 0 18z" fill="url(#e2)" />
          <path d="M13 18c-2 7 3 14 11 15.500 5-1.500 8-5 9-7-2 1-5 2-8 2-6 0-11-4-12-10.500z" fill="#124b92" />
        </svg>
        <Indicator $w={9} $c="#9b9ca1" />
      </TaskApp>
      <TaskApp $w={60} $active>
        <svg width="36" height="36" viewBox="0 0 36 36">
          <circle cx="18" cy="18" r="18" fill="#34a853" />
          <path d="M18 18 2.400 9a18 18 0 0 1 31.200 0z" fill="#ea4335" /><path d="M18 9h15.600a18 18 0 0 1-15.600 27l8-13z" fill="#fbbc05" />
          <path d="M2.400 9 10.200 22.500A9 9 0 0 0 18 27l7.800-4.500L18 36A18 18 0 0 1 2.400 9z" fill="#249546" />
          <circle cx="18" cy="18" r="9" fill="#fff" /><circle cx="18" cy="18" r="7.2" fill="#2f7bea" />
        </svg>
        <Indicator $w={24} $c="#f57c62" />
      </TaskApp>
      <TaskApp $w={72}>
        <ZaloTile><ZaloFace>Zalo</ZaloFace></ZaloTile>
        <Indicator $w={9} $c="#9b9ca1" />
      </TaskApp>
      <Tray>
        <svg width="17" height="10" viewBox="0 0 17 10" fill="none" stroke="#fff" strokeWidth="1.9"><path d="m1 9 7.500-7.500L16 9" /></svg>
        <Slot $w={36} />
        <Text $s={17} $ls={0.22}>VIE</Text>
        <Slot $w={33} />
        <svg width="24" height="18" viewBox="0 0 24 18" fill="none" stroke="#f4f4f4" strokeWidth="1.7">
          <path d="M.8 6.500a16 16 0 0 1 22.400 0M4.500 10.200a10.700 10.700 0 0 1 15 0M8 13.800a5.600 5.600 0 0 1 8 0" /><circle cx="12" cy="16" r="2" fill="#f4f4f4" stroke="none" />
        </svg>
        <Slot $w={12} />
        <svg width="24" height="20" viewBox="0 0 24 20" fill="none" stroke="#f4f4f4" strokeWidth="1.6">
          <path d="M1 7h4l5-5v16l-5-5H1zM13 6.500q2.500 3.500 0 7M16 4q4.500 6 0 12" /><path d="M19 1.500q6 8.500 0 17" stroke="#666a75" />
        </svg>
        <Slot $w={11} />
        <svg width="25" height="20" viewBox="0 0 25 20" fill="none" stroke="#f4f4f4" strokeWidth="1.7">
          <path d="M10 4.500h9q2.500 0 2.500 2.500v9q0 2.500-2.500 2.500H3.500Q1 18.500 1 16v-5" /><path d="M23.500 9v5" strokeWidth="3" /><path d="M3.500 13h5l1-5h1v8h-7z" fill="#f4f4f4" stroke="none" /><path d="M5.500-1 0 7.500h3.500L3 13l6-8.500H5.500z" fill="#f4f4f4" stroke="none" />
        </svg>
        <Slot $w={107} $end>
          <Stack $right>
            <Text $s={17} $ls={0.06} $c="#fff">9:03 PM</Text>
            <Text $s={17} $ls={0.17} $c="#fff">12/6/2023</Text>
          </Stack>
        </Slot>
        <Slot $w={14} />
        <svg width="20" height="23" viewBox="0 0 20 23" fill="#fba07c"><path d="M10 0c5 0 8 3.500 8 8v6l2 4v1H0v-1l2-4V8c0-4.500 3-8 8-8zM6 20.500h8Q13 23 10 23t-4-2.500z" /></svg>
        <Slot $w={31} />
      </Tray>
    </Taskbar>
  );
}

export default function App() {
  return (
    <Screen>
      <GlobalStyle />
      <Browser />
      <Menus />
      <Tools />
      <Workspace>
        <Palette />
        <CanvasArea />
        <FormatPanel />
      </Workspace>
      <SystemBar />
    </Screen>
  );
}
